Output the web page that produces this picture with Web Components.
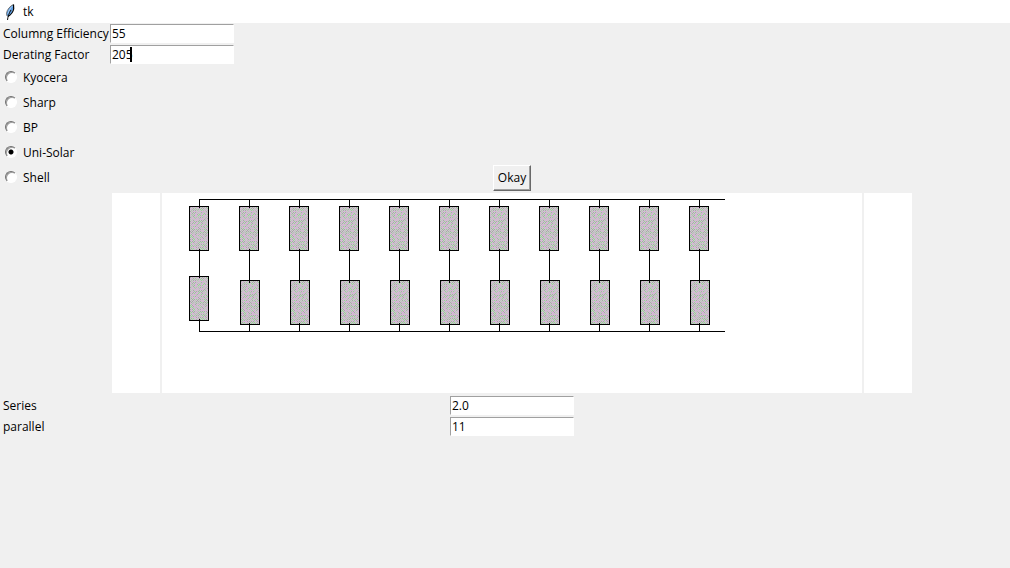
<!DOCTYPE html>
<html lang="en">
<head>
<meta charset="utf-8">
<title>tk</title>
<style>
  html { height: 100%; }
  body { margin: 0; min-height: 100%; background: #f0f0f0; color: #000; font: 12px/16px "Open Sans", "Noto Sans", sans-serif; }
</style>
</head>
<body>
<tk-window></tk-window>
<script>
const define = (name, html, setup) => customElements.define(name, class extends HTMLElement {
  constructor() {
    super();
    this.attachShadow({ mode: "open" }).innerHTML = html;
  }
  connectedCallback() { if (setup) setup(this, this.shadowRoot); }
});

define("tk-titlebar", `
<style>
  :host { display: flex; align-items: center; height: 23px; padding: 0 4px; gap: 7px; background: #fff; }
  svg { display: block; }
</style>
<svg width="12" height="18" viewBox="0 0 12 18" aria-hidden="true">
  <path d="M9.500 1.500C6.500 3 3 7 2.500 10.500L3.500 13.500c3-1 5-4 5.500-7z" fill="#5b9be0"/>
  <path d="M8.500 3C6 5.500 4.500 8 4 11" fill="none" stroke="#a9cdf2" stroke-width="1"/>
  <path d="M9.500 1.500C6 3 3 6.500 2.500 10.500L3 13" fill="none" stroke="#555" stroke-width="0.800"/>
  <path d="M9.500 1.500L9.700 6C9 9.500 6.500 12 4 13.500" fill="none" stroke="#000" stroke-width="1.200"/>
  <path d="M7 7C5 10 4 13 3.500 17" fill="none" stroke="#111" stroke-width="1"/>
</svg>
<slot></slot>`);

define("tk-entry", `
<style>
  :host { display: grid; grid-template-columns: subgrid; grid-column: 1 / -1; align-items: center; height: 21px; }
  label { padding-left: 3px; white-space: nowrap; }
  .box { position: relative; width: 124px; height: 19px; }
  :host([centered]) .box { justify-self: center; }
  input { box-sizing: border-box; width: 100%; height: 100%; display: block; margin: 0; padding: 0 1px; font: inherit; color: inherit;
    background: #fff; border: 1px solid; border-color: #a0a0a0 #fff #fff #a0a0a0; border-radius: 0; outline: 0; }
  .caret { display: none; position: absolute; left: 20px; top: 2px; width: 2px; height: 15px; background: #000; }
  :host([caret]) .caret { display: block; }
</style>
<label for="field"><slot></slot></label>
<div class="box"><input id="field" type="text"><span class="caret"></span></div>`,
(host, root) => { root.querySelector("input").value = host.getAttribute("value"); });

define("tk-radios", `
<style>
  :host { display: block; padding-bottom: 1px; }
  label { display: flex; align-items: center; gap: 6px; height: 25px; padding-left: 5px; }
  input { appearance: none; box-sizing: border-box; width: 12px; height: 12px; margin: 0 0 2px; border: 1px solid; border-radius: 50%;
    border-color: #707070 #fff #fff #707070; background: #fff; box-shadow: inset 1px 1px #a0a0a0; }
  input:checked { background: radial-gradient(circle, #000 2px, #fff 3px); }
</style>
<div role="radiogroup" aria-label="Manufacturer"></div>`,
(host, root) => {
  root.querySelector("div").innerHTML = ["Kyocera", "Sharp", "BP", "Uni-Solar", "Shell"].map(n =>
    `<label><input type="radio" name="maker" value="${n}"${n === "Uni-Solar" ? " checked" : ""}>${n}</label>`).join("");
});

define("tk-button", `
<style>
  :host { display: block; }
  button { display: block; height: 26px; padding: 0 4px; margin: 0; font: inherit; color: inherit; background: #f0f0f0;
    border: 1px solid; border-color: #fff #696969 #696969 #fff; box-shadow: inset -1px -1px #a0a0a0; border-radius: 0; }
</style>
<button type="button"><slot></slot></button>`);

define("tk-canvas", `
<style>
  :host { display: block; height: 200px; background: #fff; overflow: hidden; }
  ::slotted(*) { display: block; }
</style><slot></slot>`);

define("solar-array", `
<style>:host { display: block; } svg { display: block; }</style>
<svg width="700" height="200" shape-rendering="crispEdges" role="img" aria-label="Solar panel wiring"></svg>`,
(host, root) => {
  // Dithered grey: two interleaved sets of cells, light and tinted.
  const light = ["#cccccc", "#cccccc", "#d8c0d8", "#c8c8c8", "#c0d4c0"];
  const tints = ["#a8a8a8", "#b8b8b8", "#dca8dc", "#98d098", "#c0c0c0", "#d8a8d8", "#a8a8a8"];
  let cells = "", seed = 7;
  const pick = list => {
    seed = (seed * 48271) % 2147483647;
    return list[Math.floor(seed / 2147483647 * list.length)];
  };
  for (let y = 0; y < 43; y++) for (let x = 0; x < 18; x++)
    cells += `<rect x="${x}" y="${y}" width="1" height="1" fill="${pick((x + y) % 2 ? light : tints)}"/>`;
  let out = `<defs><g id="panel"><rect width="20" height="45"/><g transform="translate(1 1)">${cells}</g></g></defs>`;
  const line = (x, y, w, h) => `<rect x="${x}" y="${y}" width="${w}" height="${h}"/>`;
  out += line(37, 6, 526, 1) + line(37, 138, 526, 1);
  for (let i = 0; i < 11; i++) {
    const x = 27 + i * 50, low = i ? 87 : 83;
    out += `<use href="#panel" x="${x}" y="13"/><use href="#panel" x="${i ? x + 1 : x}" y="${low}"/>`;
    out += line(x + 10, 6, 1, 9) + line(x + 10, 56, 1, i ? 34 : 29) + line(x + 10, low + 43, 1, 139 - low - 43);
  }
  root.querySelector("svg").innerHTML = out;
});

define("tk-window", `
<style>
  :host { display: block; }
  main { display: grid; grid-template-columns: minmax(110px, max-content) minmax(0, 804px); align-items: end; }
  tk-button { justify-self: center; }
  .canvases { grid-column: 2; display: flex; gap: 2px; padding: 2px; }
  .side { flex: 0 1 48px; }
  .middle { flex: 0 1 700px; }
</style>
<tk-titlebar>tk</tk-titlebar>
<main>
  <tk-entry value="55">Columng Efficiency</tk-entry>
  <tk-entry value="205" caret>Derating Factor</tk-entry>
  <tk-radios></tk-radios>
  <tk-button>Okay</tk-button>
  <div class="canvases">
    <tk-canvas class="side"></tk-canvas>
    <tk-canvas class="middle"><solar-array></solar-array></tk-canvas>
    <tk-canvas class="side"></tk-canvas>
  </div>
  <tk-entry value="2.0" centered>Series</tk-entry>
  <tk-entry value="11" centered>parallel</tk-entry>
</main>`);
</script>
</body>
</html>
